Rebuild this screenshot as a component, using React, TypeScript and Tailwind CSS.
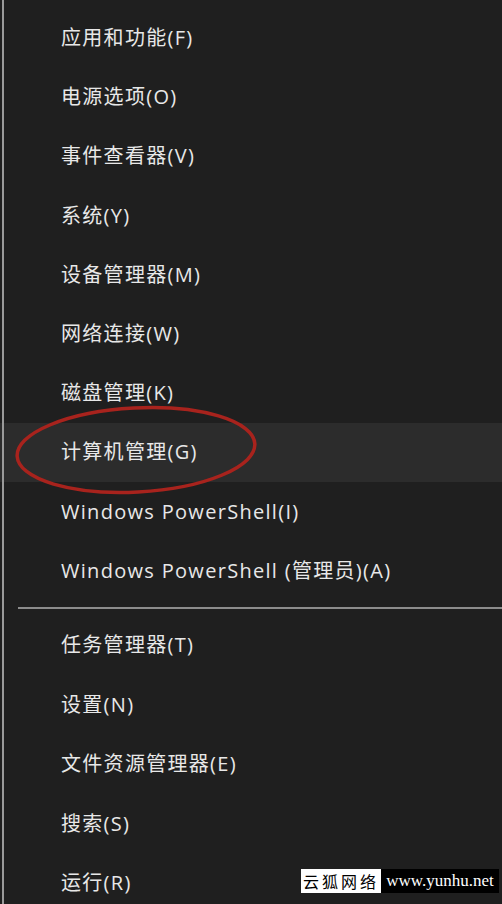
const groupOne = [
  "应用和功能(F)",
  "电源选项(O)",
  "事件查看器(V)",
  "系统(Y)",
  "设备管理器(M)",
  "网络连接(W)",
  "磁盘管理(K)",
  "计算机管理(G)",
  "Windows PowerShell(I)",
  "Windows PowerShell (管理员)(A)",
];

const groupTwo = ["任务管理器(T)", "设置(N)", "文件资源管理器(E)", "搜索(S)", "运行(R)"];

function MenuRow({ label, active, h }: { label: string; active?: boolean; h: string }) {
  return (
    <div className={`flex ${h} items-center pl-[61px] text-[20px] text-[#e8e8e8] ${active ? "bg-[#2c2c2c]" : ""}`}>
      <span className="leading-none tracking-[1.3px]">{label}</span>
    </div>
  );
}

export default function App() {
  return (
    <div
      className="relative h-[904px] w-[502px] overflow-hidden bg-[#1f1f1f]"
      style={{ fontFamily: '"Open Sans", "Noto Sans CJK SC", sans-serif' }}
    >
      <div className="absolute left-[2px] top-0 h-full w-[2px] bg-[#9a9a9a]" />
      <div className="pt-[8.5px]">
        {groupOne.map((l, i) => (
          <MenuRow key={l} label={l} active={i === 7} h="h-[59.2px]" />
        ))}
      </div>
      <div className="ml-[18px] mt-[7px] h-[2px] bg-[#8c8c8c]" />
      <div className="pt-[6px]">
        {groupTwo.map((l) => (
          <MenuRow key={l} label={l} h="h-[59.5px]" />
        ))}
      </div>

      {/* red annotation ring */}
      <svg className="absolute left-[11px] top-[402px]" width="250" height="96" viewBox="0 0 250 96">
        <ellipse cx="125" cy="48" rx="119" ry="42" fill="none" stroke="#a8231d" strokeWidth="3.5" transform="rotate(-3 125 48)" />
      </svg>

      {/* watermark */}
      <div className="absolute left-[301px] top-[869px] flex h-[24px]">
        <div
          className="flex w-[80px] items-center justify-center whitespace-nowrap bg-white text-[16px] tracking-[3px] text-black"
          style={{ fontFamily: '"Noto Sans CJK SC", serif' }}
        >
          云狐网络
        </div>
        <div
          className="flex w-[118px] items-center justify-center whitespace-nowrap bg-black text-[17px] text-white"
          style={{ fontFamily: '"Liberation Serif", serif' }}
        >
          www.yunhu.net
        </div>
      </div>
    </div>
  );
}
